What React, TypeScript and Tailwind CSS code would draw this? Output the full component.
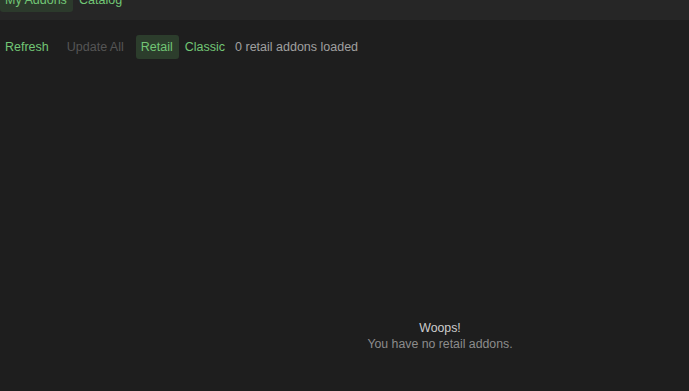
import React from "react";

export default function App() {
  return (
    <div
      className="w-[689px] h-[391px] overflow-hidden bg-[#1e1e1e] flex flex-col text-[12.5px]"
      style={{ fontFamily: '"Liberation Sans", Arial, sans-serif' }}
    >
      <div className="h-[20px] bg-[#262626] shrink-0 overflow-hidden">
        <div className="flex items-center gap-[6px] -mt-[11px]">
          <div className="h-[23px] w-[73px] px-[5px] flex items-center rounded-[3px] bg-[#2c3a2c] text-[#72c675]">
            My Addons
          </div>
          <div className="h-[23px] flex items-center text-[#72c675]">Catalog</div>
        </div>
      </div>
      <div className="flex items-center h-[24px] mt-[15px] px-[5px]">
        <span className="text-[#72c675]">Refresh</span>
        <span className="ml-[18px] text-[#555555]">Update All</span>
        <span className="ml-[12px] h-[24px] w-[43px] px-[5px] flex items-center rounded-[3px] bg-[#2c3d2c] text-[#72c675]">
          Retail
        </span>
        <span className="ml-[6px] text-[#72c675]">Classic</span>
        <span className="ml-[10px] text-[#a0a0a0]">0 retail addons loaded</span>
      </div>
      <div className="flex-1 flex">
        <div className="w-[191px] shrink-0" />
        <div className="flex-1 flex flex-col items-center pt-[261px] leading-[16px] text-[12.3px]">
          <div className="text-[#cccccc]">Woops!</div>
          <div className="text-[#8c8c8c]">You have no retail addons.</div>
        </div>
      </div>
    </div>
  );
}
